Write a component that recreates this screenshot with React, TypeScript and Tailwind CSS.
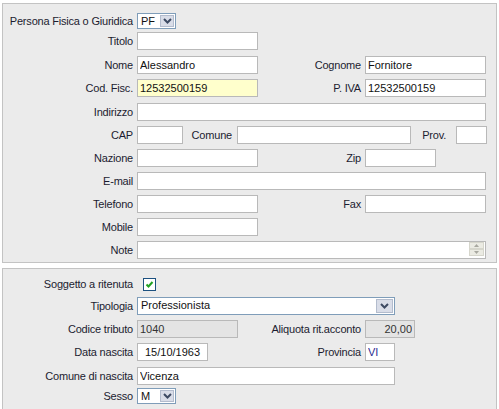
import React from "react"

const font = "font-['Liberation_Sans','DejaVu_Sans',sans-serif]"
const box = "h-[18px] border border-[#b9b9b9] bg-white px-[2px] text-[11px] leading-[16px] text-[#111] outline-none"

function Label({ w = "w-[130px]", children }: { w?: string; children?: React.ReactNode }) {
  return <div className={`${w} shrink-0 text-right text-[11px] tracking-[-0.2px] text-[#1c1c30]`}>{children}</div>
}

function Chevron() {
  return (
    <svg width="9" height="6" viewBox="0 0 9 6">
      <path d="M1 1 L4.5 4.5 L8 1" fill="none" stroke="#3d4a63" strokeWidth="2" />
    </svg>
  )
}

function Select({ value, w, h = "h-[16px]", btn = "w-[14px]" }: { value: string; w: string; h?: string; btn?: string }) {
  return (
    <div className={`${w} ${h} flex border border-[#7f9db9] bg-white p-px`}>
      <div className="flex-1 pl-[2px] text-[11px] leading-[13px] text-[#111]">{value}</div>
      <div className={`${btn} flex items-center justify-center border border-[#b3bccd] bg-[#d9dde8]`}>
        <Chevron />
      </div>
    </div>
  )
}

function Field({ w, value = "", className = "" }: { w: string; value?: string; className?: string }) {
  return <input readOnly value={value} className={`${box} ${w} ${className}`} />
}

export default function App() {
  return (
    <div className={`${font} h-[409px] w-[499px] overflow-hidden bg-white`}>
      <div className="mx-[2px] mt-[3px] border border-[#c3c3c3] bg-[#ebebeb] pb-[3px] pt-[9px]">
        <div className="flex h-[16px] items-center">
          <Label>Persona Fisica o Giuridica</Label>
          <div className="ml-[4px]">
            <Select value="PF" w="w-[39px]" />
          </div>
        </div>

        <div className="mt-[3px] flex items-center gap-[4px]">
          <Label>Titolo</Label>
          <Field w="w-[121px]" />
        </div>

        <div className="mt-[6px] flex items-center">
          <Label>Nome</Label>
          <Field w="ml-[4px] w-[121px]" value="Alessandro" />
          <Label w="w-[103px]">Cognome</Label>
          <Field w="ml-[4px] w-[121px]" value="Fornitore" />
        </div>

        <div className="mt-[5px] flex items-center">
          <Label>Cod. Fisc.</Label>
          <Field w="ml-[4px] w-[121px]" value="12532500159" className="!bg-[#ffffcc]" />
          <Label w="w-[103px]">P. IVA</Label>
          <Field w="ml-[4px] w-[121px]" value="12532500159" />
        </div>

        <div className="mt-[6px] flex items-center gap-[4px]">
          <Label>Indirizzo</Label>
          <Field w="w-[349px]" />
        </div>

        <div className="mt-[5px] flex items-center">
          <Label>CAP</Label>
          <Field w="ml-[4px] w-[46px]" />
          <Label w="w-[49px]">Comune</Label>
          <Field w="ml-[5px] w-[174px]" />
          <Label w="w-[35px]">Prov.</Label>
          <Field w="ml-[10px] w-[31px]" />
        </div>

        <div className="mt-[5px] flex items-center">
          <Label>Nazione</Label>
          <Field w="ml-[4px] w-[121px]" />
          <Label w="w-[103px]">Zip</Label>
          <Field w="ml-[4px] w-[71px]" />
        </div>

        <div className="mt-[5px] flex items-center gap-[4px]">
          <Label>E-mail</Label>
          <Field w="w-[349px]" />
        </div>

        <div className="mt-[5px] flex items-center">
          <Label>Telefono</Label>
          <Field w="ml-[4px] w-[121px]" />
          <Label w="w-[103px]">Fax</Label>
          <Field w="ml-[4px] w-[121px]" />
        </div>

        <div className="mt-[5px] flex items-center gap-[4px]">
          <Label>Mobile</Label>
          <Field w="w-[121px]" />
        </div>

        <div className="mt-[5px] flex items-center gap-[4px]">
          <Label>Note</Label>
          <div className="flex h-[18px] w-[349px] border border-[#b9b9b9] bg-white">
            <div className="flex-1" />
            <div className="mr-px flex w-[15px] flex-col">
              <div className="flex h-[7px] items-center justify-center border border-[#d6d6cc] bg-[#ebebe3]">
                <svg width="5" height="3" viewBox="0 0 5 3"><path d="M0 3 L2.5 0 L5 3 Z" fill="#a8a8a0" /></svg>
              </div>
              <div className="flex h-[7px] items-center justify-center border border-[#d6d6cc] bg-[#ebebe3]">
                <svg width="5" height="3" viewBox="0 0 5 3"><path d="M0 0 L2.5 3 L5 0 Z" fill="#a8a8a0" /></svg>
              </div>
            </div>
          </div>
        </div>
      </div>

      <div className="mx-[2px] mt-[5px] h-[200px] border border-[#c3c3c3] bg-[#ebebeb] pt-[9px]">
        <div className="flex h-[13px] items-center">
          <Label>Soggetto a ritenuta</Label>
          <div className="ml-[10px] flex h-[13px] w-[13px] items-center justify-center border border-[#1c5180] bg-white">
            <svg width="9" height="9" viewBox="0 0 9 9">
              <path d="M1.5 4.5 L3.5 6.5 L7.5 2" fill="none" stroke="#21a121" strokeWidth="2" />
            </svg>
          </div>
        </div>

        <div className="mt-[6px] flex items-center gap-[4px]">
          <Label>Tipologia</Label>
          <Select value="Professionista" w="w-[258px]" h="h-[18px]" btn="w-[17px]" />
        </div>

        <div className="mt-[5px] flex items-center">
          <Label>Codice tributo</Label>
          <Field w="ml-[4px] w-[101px]" value="1040" className="!bg-[#e4e4e4] !text-[#333]" />
          <Label w="w-[123px]">Aliquota rit.acconto</Label>
          <Field w="ml-[4px] w-[50px]" value="20,00" className="!bg-[#e4e4e4] text-right !text-[#333]" />
        </div>

        <div className="mt-[5px] flex items-center">
          <Label>Data nascita</Label>
          <Field w="ml-[4px] w-[71px]" value="15/10/1963" className="text-center" />
          <Label w="w-[153px]">Provincia</Label>
          <Field w="ml-[4px] w-[30px]" value="VI" className="!text-[#2a2a90]" />
        </div>

        <div className="mt-[6px] flex items-center gap-[4px]">
          <Label>Comune di nascita</Label>
          <Field w="w-[258px]" value="Vicenza" />
        </div>

        <div className="mt-[3px] flex h-[16px] items-center gap-[4px]">
          <Label>Sesso</Label>
          <Select value="M" w="w-[39px]" />
        </div>
      </div>
    </div>
  )
}
